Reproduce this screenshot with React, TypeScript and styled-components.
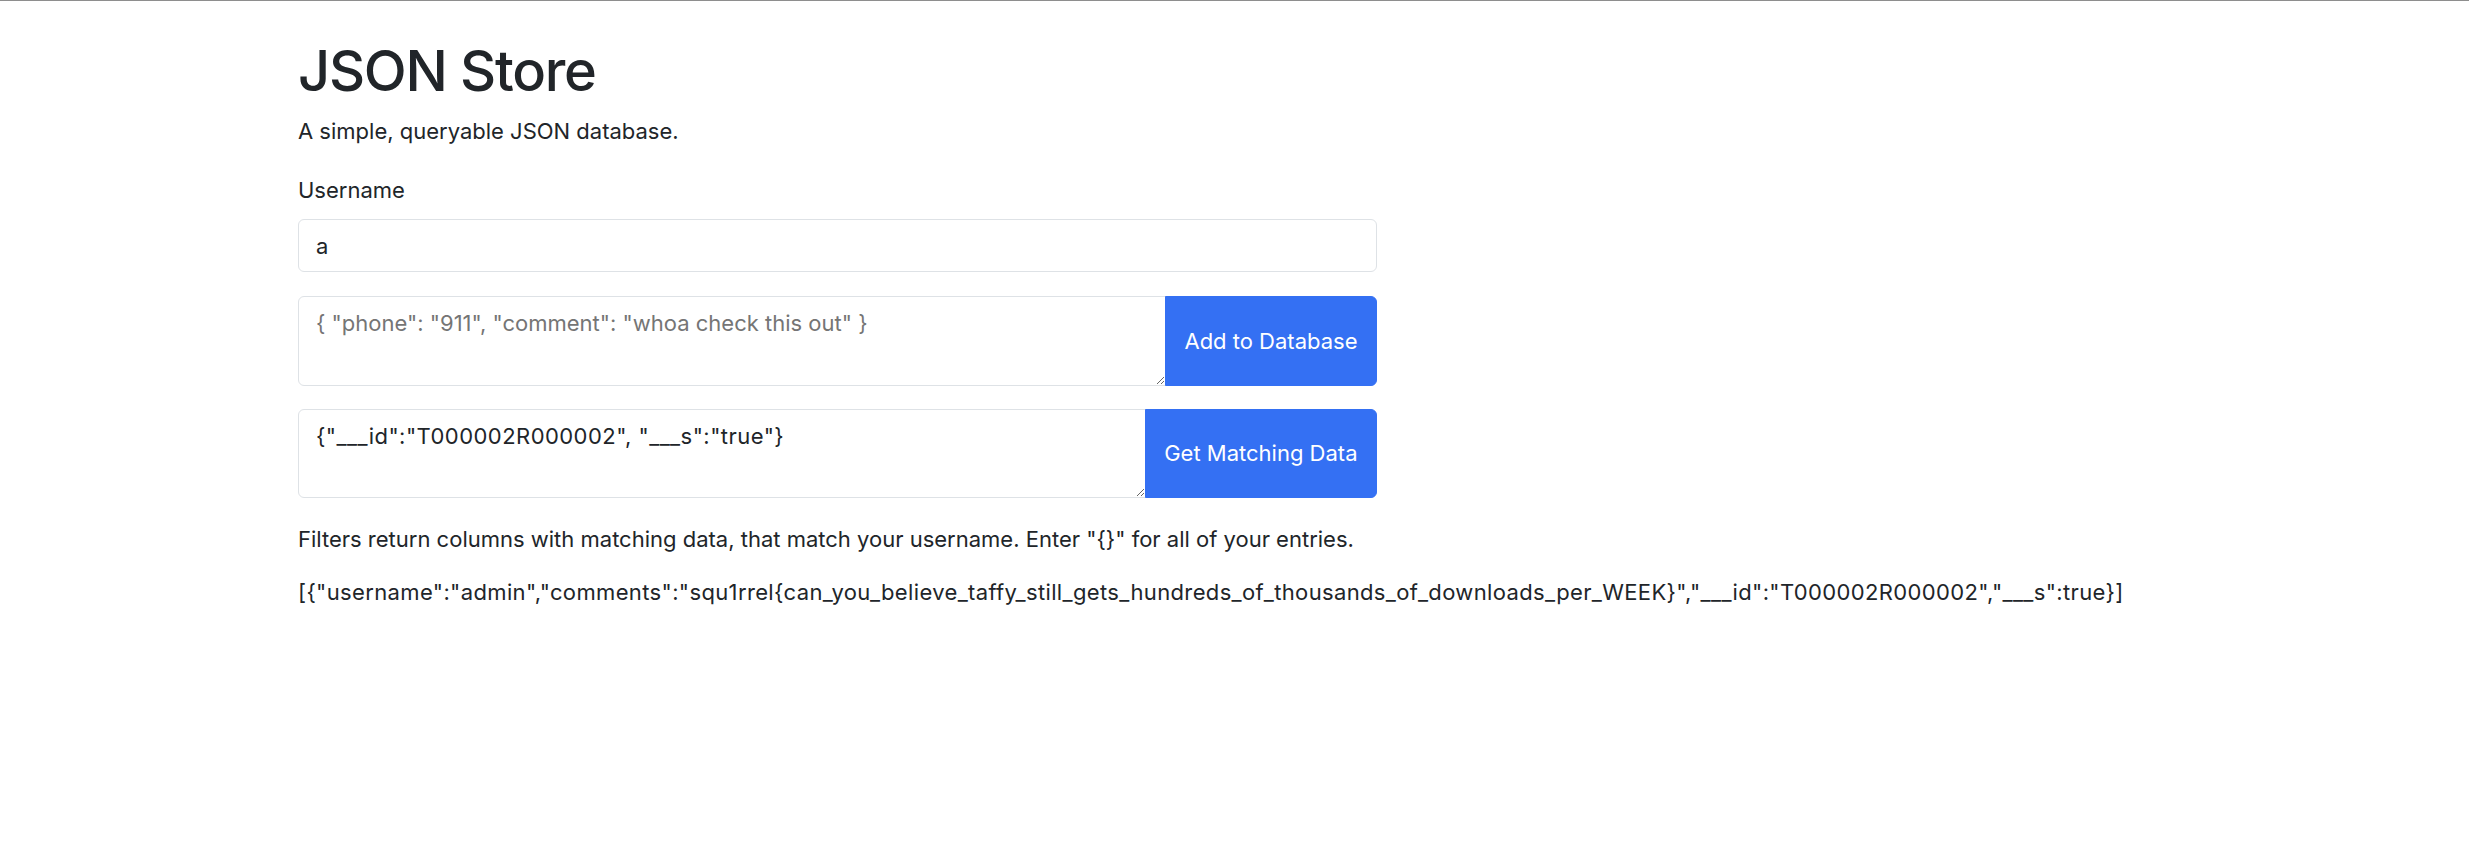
import React, { useState } from "react";
import styled, { createGlobalStyle } from "styled-components";

const GlobalStyle = createGlobalStyle`
  * { box-sizing: border-box; }
  body {
    margin: 0;
    background: #ffffff;
    color: #212529;
    font-family: "Inter", "Liberation Sans", sans-serif;
    font-size: 22px;
    line-height: 1.5;
  }
`;

const PageWrapper = styled.div`
  min-height: 100vh;
  border-top: 1px solid #8e8e8e;
  padding: 37px 0 0 298px;
`;

const ContainerWrapper = styled.div`
  width: 1079px;
`;

const TitleWrapper = styled.h1`
  margin: 0 0 10px;
  font-size: 56px;
  font-weight: 500;
  line-height: 1.2;
  letter-spacing: -1.3px;
`;

const LeadWrapper = styled.p<{ $gap?: number }>`
  margin: 0 0 ${(p) => p.$gap ?? 0}px;
  white-space: nowrap;
`;

const LabelWrapper = styled.label`
  display: block;
  margin-bottom: 12px;
`;

const InputWrapper = styled.input`
  display: block;
  width: 100%;
  height: 53px;
  padding: 9px 17px;
  font: inherit;
  color: #212529;
  border: 1px solid #dee2e6;
  border-radius: 6px;
  outline: none;
`;

const GroupWrapper = styled.div<{ $top: number; $height: number }>`
  display: flex;
  align-items: stretch;
  margin-top: ${(p) => p.$top}px;
  height: ${(p) => p.$height}px;
`;

const TextAreaWrapper = styled.textarea<{ $spacing?: number }>`
  flex: 1;
  min-width: 0;
  padding: 10px 17px;
  font: inherit;
  letter-spacing: ${(p) => p.$spacing ?? 0}px;
  color: #212529;
  border: 1px solid #dee2e6;
  border-radius: 6px 0 0 6px;
  resize: vertical;
  outline: none;
  ::placeholder {
    color: #54585c;
  }
`;

const SubmitBtnWrapper = styled.button`
  flex: none;
  padding: 0 18.5px;
  font: inherit;
  color: #ffffff;
  background-color: #3470f3;
  border: 1px solid #3470f3;
  border-radius: 0 6px 6px 0;
  margin-left: -1px;
  cursor: pointer;
`;

const TextWrapper = styled.p<{ $top: number; $spacing?: number }>`
  margin: ${(p) => p.$top}px 0 0;
  letter-spacing: ${(p) => p.$spacing ?? 0}px;
  white-space: nowrap;
`;

export default function App() {
  const [username, setUsername] = useState("a");
  const [entry, setEntry] = useState("");
  const [filter, setFilter] = useState('{"___id":"T000002R000002", "___s":"true"}');

  const result =
    '[{"username":"admin","comments":"squ1rrel{can_you_believe_taffy_still_gets_hundreds_of_thousands_of_downloads_per_WEEK}","___id":"T000002R000002","___s":true}]';

  return (
    <>
      <GlobalStyle />
      <PageWrapper>
        <ContainerWrapper>
          <TitleWrapper>JSON Store</TitleWrapper>
          <LeadWrapper $gap={26}>A simple, queryable JSON database.</LeadWrapper>
          <LabelWrapper htmlFor="username">Username</LabelWrapper>
          <InputWrapper
            id="username"
            value={username}
            onChange={(e) => setUsername(e.target.value)}
          />
          <GroupWrapper $top={24} $height={90}>
            <TextAreaWrapper
              placeholder='{ "phone": "911", "comment": "whoa check this out" }'
              value={entry}
              onChange={(e) => setEntry(e.target.value)}
            />
            <SubmitBtnWrapper>Add to Database</SubmitBtnWrapper>
          </GroupWrapper>
          <GroupWrapper $top={23} $height={89}>
            <TextAreaWrapper
              $spacing={0.45}
              value={filter}
              onChange={(e) => setFilter(e.target.value)}
            />
            <SubmitBtnWrapper>Get Matching Data</SubmitBtnWrapper>
          </GroupWrapper>
          <TextWrapper $top={25}>
            Filters return columns with matching data, that match your username. Enter "{"{}"}" for all of your
            entries.
          </TextWrapper>
          <TextWrapper $top={20} $spacing={0.36}>
            {result}
          </TextWrapper>
        </ContainerWrapper>
      </PageWrapper>
    </>
  );
}
